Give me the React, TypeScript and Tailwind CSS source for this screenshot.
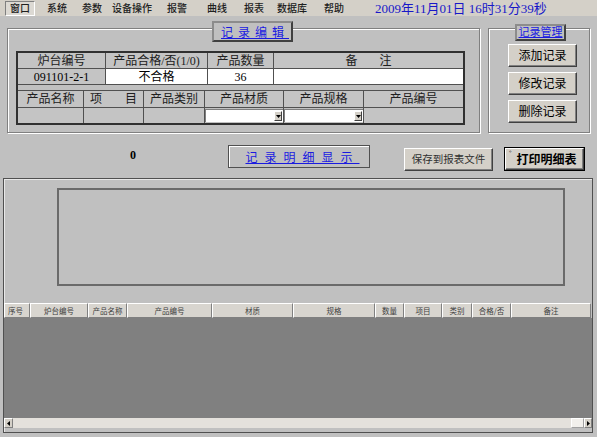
import React from 'react'

const serif = { fontFamily: '"Liberation Serif", "Noto Sans CJK SC", serif' }

const menuItems = [
  { label: '系统', cls: 'ml-[12px]' },
  { label: '参数', cls: 'ml-[15px]' },
  { label: '设备操作', cls: 'ml-[10px]' },
  { label: '报警', cls: 'ml-[15px]' },
  { label: '曲线', cls: 'ml-[20px]' },
  { label: '报表', cls: 'ml-[17px]' },
  { label: '数据库', cls: 'ml-[13px]' },
  { label: '帮助', cls: 'ml-[17px]' },
]

const gridCols = [
  { label: '序号', cls: 'w-[26px] justify-start pl-[3px]' },
  { label: '炉台编号', cls: 'w-[58px] justify-center' },
  { label: '产品名称', cls: 'w-[39px] justify-center' },
  { label: '产品编号', cls: 'w-[85px] justify-center' },
  { label: '材质', cls: 'w-[81px] justify-center' },
  { label: '规格', cls: 'w-[82px] justify-center' },
  { label: '数量', cls: 'w-[29px] justify-center' },
  { label: '项目', cls: 'w-[38px] justify-center' },
  { label: '类别', cls: 'w-[30px] justify-center' },
  { label: '合格/否', cls: 'w-[39px] justify-center' },
  { label: '备注', cls: 'w-[80px] justify-center' },
]

function ClassicButton({ children, className }: { children: React.ReactNode; className?: string }) {
  return (
    <div
      className={
        'flex items-center justify-center bg-[#d4d0c8] border border-t-white border-l-white border-r-[#404040] border-b-[#404040] shadow-[inset_-1px_-1px_0_#808080] ' +
        (className ?? '')
      }
    >
      {children}
    </div>
  )
}

function Combo() {
  return (
    <div className="h-full bg-[#c0c0c0] flex items-end pb-[1px]">
      <div className="w-full h-[13px] bg-white border-t border-l border-t-[#808080] border-l-[#808080] flex justify-end items-center pr-[1px]">
        <div className="w-[8px] h-[10px] bg-[#d4d0c8] border border-t-white border-l-white border-r-[#404040] border-b-[#404040] flex items-center justify-center">
          <svg width="5" height="3" viewBox="0 0 5 3">
            <path d="M0 0H5L2.5 3Z" fill="#000" />
          </svg>
        </div>
      </div>
    </div>
  )
}

export default function App() {
  const hdr = 'bg-[#c4c4c4] flex items-center justify-center text-[12px] text-[#202020] leading-none'
  return (
    <div
      className="w-[597px] h-[437px] bg-[#c0c0c0] overflow-hidden text-black"
      style={{ fontFamily: '"Noto Sans CJK SC", sans-serif' }}
    >
      {/* Menu bar */}
      <div className="h-[16px] bg-[#d4d0c8] flex items-center text-[10px] text-[#202020] font-medium leading-none">
        <div className="ml-[5px] w-[30px] h-[15px] flex items-center justify-center border border-t-[#808080] border-l-[#808080] border-b-white border-r-white bg-[#dcd9d3]">
          窗口
        </div>
        {menuItems.map(m => (
          <span key={m.label} className={m.cls}>
            {m.label}
          </span>
        ))}
        <span className="ml-[31px] text-[13px] text-[#1818c8] font-normal whitespace-nowrap" style={serif}>
          2009年11月01日 16时31分39秒
        </span>
      </div>

      {/* Editing section */}
      <div className="flex mt-[12px] ml-[7px] gap-[8px]">
        <div className="relative w-[473px] h-[105px] border border-[#808080] shadow-[1px_1px_0_#fff,inset_1px_1px_0_#fff] pl-[8px] pt-[22px]">
          <div className="absolute left-[204px] top-[-8px] w-[81px] h-[21px] bg-[#c0c0c0] border-2 border-t-[#8c8c8c] border-l-[#8c8c8c] border-r-[#404040] border-b-[#404040] flex items-center justify-center">
            <span className="text-[12px] text-[#1a1ae0] underline tracking-[5px] pl-[5px] leading-none whitespace-nowrap">记录编辑</span>
          </div>

          <div className="w-[449px] border-2 border-[#303030] bg-[#505050] flex flex-col gap-px" style={serif}>
            <div className="grid grid-cols-[87px_101px_65px_189px] gap-px h-[15px]">
              <div className={hdr}>炉台编号</div>
              <div className={hdr}>产品合格/否(1/0)</div>
              <div className={hdr}>产品数量</div>
              <div className={hdr + ' gap-[22px]'}>
                <span>备</span>
                <span>注</span>
              </div>
            </div>
            <div className="grid grid-cols-[87px_101px_65px_189px] gap-px h-[15px] text-[12px] leading-none">
              <div className="bg-[#c4c4c4] flex items-center justify-center">091101-2-1</div>
              <div className="bg-white flex items-center justify-center">不合格</div>
              <div className="bg-white flex items-center justify-center">36</div>
              <div className="bg-white" />
            </div>
            <div className="h-[5px] bg-[#c0c0c0]" />
            <div className="grid grid-cols-[65px_59px_60px_78px_79px_99px] gap-px h-[16px]">
              <div className={hdr}>产品名称</div>
              <div className={hdr + ' !justify-between px-[6px]'}>
                <span>项</span>
                <span>目</span>
              </div>
              <div className={hdr}>产品类别</div>
              <div className={hdr}>产品材质</div>
              <div className={hdr}>产品规格</div>
              <div className={hdr}>产品编号</div>
            </div>
            <div className="grid grid-cols-[65px_59px_60px_78px_79px_99px] gap-px h-[15px]">
              <div className="bg-[#c4c4c4]" />
              <div className="bg-[#c4c4c4]" />
              <div className="bg-[#c4c4c4]" />
              <Combo />
              <Combo />
              <div className="bg-[#c4c4c4]" />
            </div>
          </div>
        </div>

        <div className="relative w-[102px] h-[105px] border border-[#808080] shadow-[1px_1px_0_#fff,inset_1px_1px_0_#fff] pl-[19px] pt-[15px] flex flex-col gap-[5px]">
          <div className="absolute left-[26px] top-[-5px] w-[51px] h-[17px] bg-[#c0c0c0] border-2 border-t-[#8c8c8c] border-l-[#8c8c8c] border-r-[#404040] border-b-[#404040] flex items-center justify-center">
            <span className="text-[11px] text-[#1a1ae0] underline leading-none whitespace-nowrap" style={serif}>记录管理</span>
          </div>
          {['添加记录', '修改记录', '删除记录'].map(t => (
            <ClassicButton key={t} className="w-[69px] h-[23px] text-[12px] leading-none">
              <span style={serif}>{t}</span>
            </ClassicButton>
          ))}
        </div>
      </div>

      {/* Detail controls */}
      <div className="flex items-start mt-[12px] h-[26px]">
        <span className="ml-[130px] w-[98px] mt-[4px] text-[12px] font-semibold leading-none" style={serif}>
          0
        </span>
        <div className="w-[142px] h-[23px] border border-[#505050] shadow-[inset_1px_1px_0_#fff] flex items-center justify-center">
          <span className="text-[12px] text-[#1a1ae0] underline tracking-[7px] pl-[7px] leading-none whitespace-nowrap">记录明细显示</span>
        </div>
        <ClassicButton className="ml-[34px] mt-[3px] w-[89px] h-[23px] text-[10.5px] text-[#303030] leading-none whitespace-nowrap">
          保存到报表文件
        </ClassicButton>
        <div className="ml-[11px] mt-[2px] w-[81px] h-[24px] border border-black">
          <ClassicButton className="w-full h-full text-[12px] font-bold leading-none relative whitespace-nowrap">
            <span className="absolute left-[3px] top-[1px] text-[7px] font-normal">°</span>
            <span className="pl-[4px]">打印明细表</span>
          </ClassicButton>
        </div>
      </div>

      {/* Detail panel */}
      <div className="mt-[7px] ml-[3px] w-[590px] h-[255px] border border-[#505050] shadow-[inset_1px_1px_0_#e8e8e8] flex flex-col">
        <div className="ml-[53px] mt-[9px] w-[508px] h-[98px] border-2 border-[#6a6a6a]" />
        <div className="mt-[17px] flex h-[15px] text-[7.5px] text-[#404040] leading-none">
          {gridCols.map(c => (
            <div
              key={c.label}
              className={
                'h-full flex items-center whitespace-nowrap bg-[#d8d5cf] border-t border-l border-t-white border-l-white border-r border-r-[#808080] border-b border-b-[#808080] ' +
                c.cls
              }
            >
              {c.label}
            </div>
          ))}
        </div>
        <div className="h-[100px] bg-[#808080]" />
        <div className="h-[10px] flex bg-[#e4e1dc]">
          <div className="w-[9px] h-full bg-[#d4d0c8] border border-t-white border-l-white border-r-[#808080] border-b-[#808080] flex items-center justify-center">
            <svg width="3" height="5" viewBox="0 0 3 5">
              <path d="M3 0V5L0 2.5Z" fill="#000" />
            </svg>
          </div>
          <div className="flex-1" />
          <div className="w-[13px] h-full bg-[#f2f0ec] border border-t-white border-l-white border-r-[#a0a0a0] border-b-[#a0a0a0]" />
          <div className="w-[8px] h-full bg-[#d4d0c8] border border-t-white border-l-white border-r-[#808080] border-b-[#808080] flex items-center justify-center">
            <svg width="3" height="5" viewBox="0 0 3 5">
              <path d="M0 0V5L3 2.5Z" fill="#000" />
            </svg>
          </div>
        </div>
      </div>
    </div>
  )
}
